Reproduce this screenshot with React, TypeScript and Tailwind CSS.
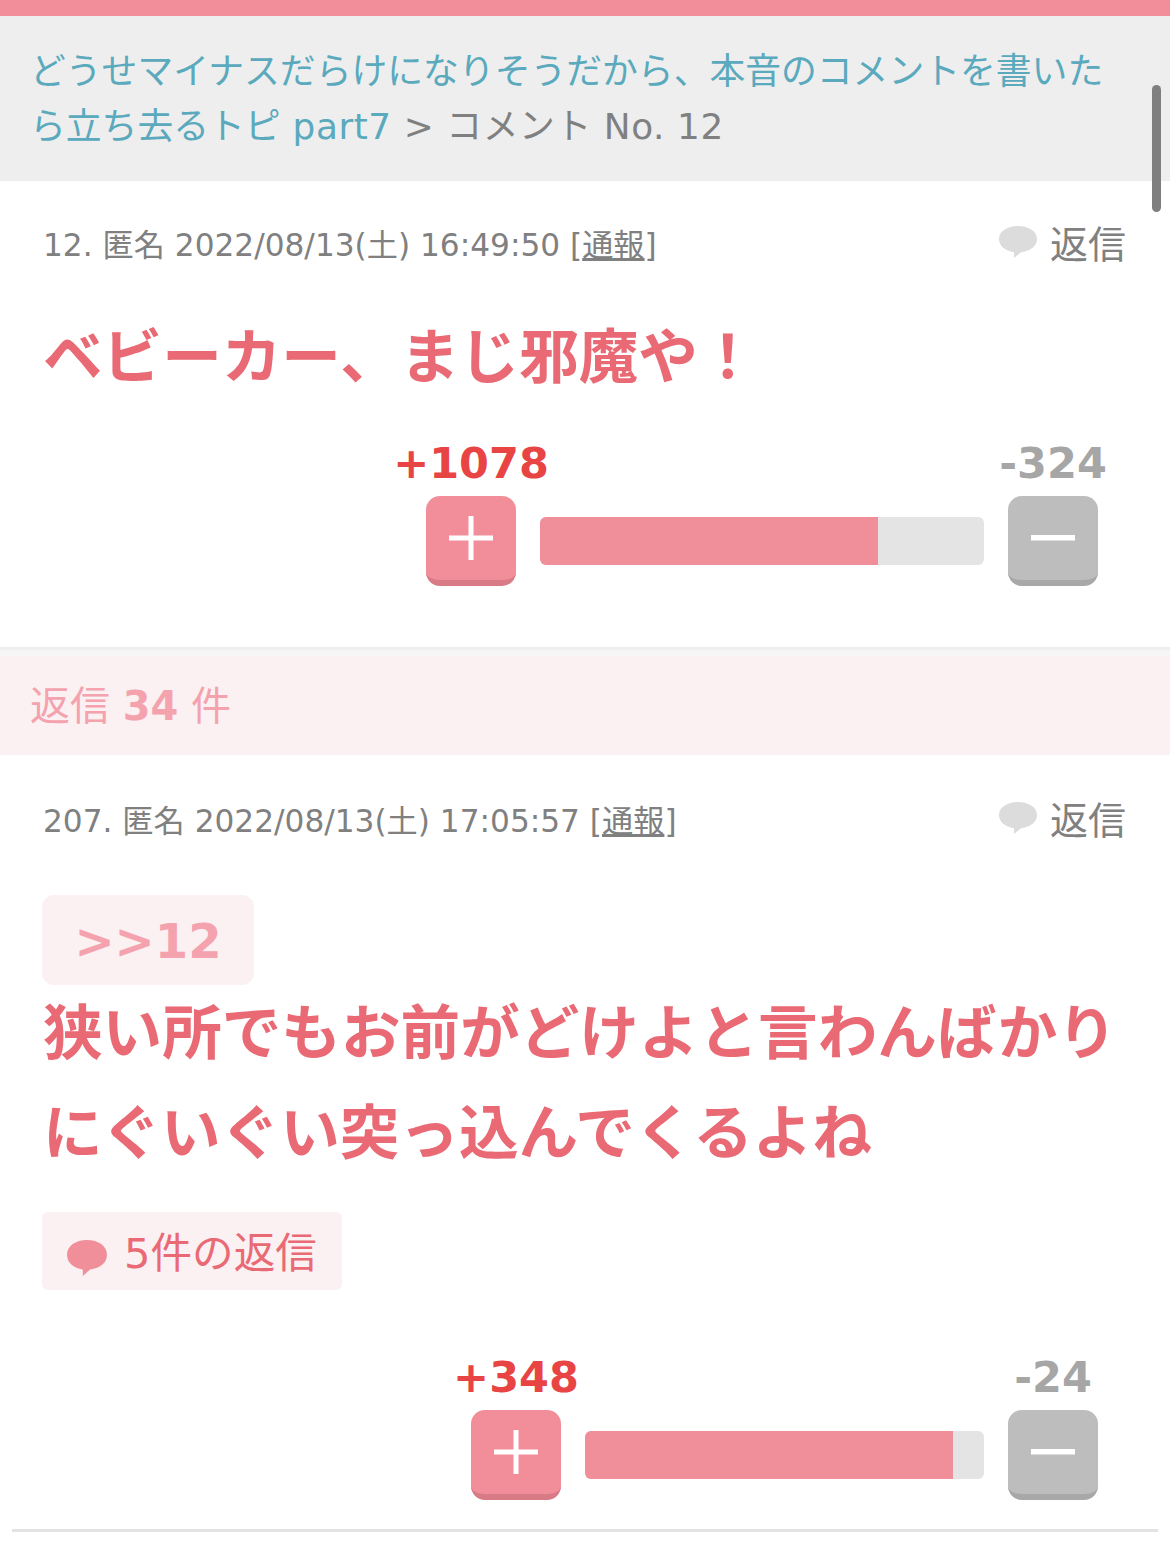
function Bubble({ className }: { className: string }) {
  return (
    <svg viewBox="0 0 40 34" preserveAspectRatio="none" className={className} fill="currentColor">
      <path d="M20 1C9 1 1 6.5 1 14c0 7 6 12 15 13.2L16 33l7-5.8C33 26 39 21 39 14 39 6.5 31 1 20 1z" />
    </svg>
  );
}

function MetaRow({ head, date }: { head: string; date: string }) {
  return (
    <div className="flex items-center justify-between pl-[43px] pr-[44px] h-[50px]">
      <div className="text-[31.2px] leading-[50px] text-[#808080] whitespace-nowrap">
        {head} {date} [<span className="underline">通報</span>]
      </div>
      <div className="flex items-center text-[#808080]">
        <Bubble className="w-[40px] h-[34px] text-[#dcdcdc] mr-[12px] mb-[6px]" />
        <span className="text-[38px] leading-[50px]">返信</span>
      </div>
    </div>
  );
}

function VoteButton({ label, symbol, plus }: { label: string; symbol: "plus" | "minus"; plus: boolean }) {
  return (
    <div className="flex flex-col items-center w-[90px]">
      <div
        className={
          plus
            ? "mt-[1px] text-[43px] leading-[50px] h-[50px] font-bold text-[#e94444] whitespace-nowrap"
            : "mt-[1px] text-[43px] leading-[50px] h-[50px] font-bold text-[#a6a6a6] whitespace-nowrap"
        }
      >
        {label}
      </div>
      <div
        className={
          plus
            ? "mt-[8px] w-[90px] h-[90px] rounded-[14px] bg-[#f28e99] border-b-[6px] border-[#d97b87] flex items-center justify-center"
            : "mt-[8px] w-[90px] h-[90px] rounded-[14px] bg-[#bdbdbd] border-b-[6px] border-[#a8a8a8] flex items-center justify-center"
        }
      >
        <svg viewBox="0 0 44 44" className="w-[44px] h-[44px]" fill="#ffffff">
          {symbol === "plus" ? (
            <path d="M0 19.5h19.5V0h5v19.5H44v5H24.5V44h-5V24.5H0z" />
          ) : (
            <rect x="0" y="19" width="44" height="5.5" />
          )}
        </svg>
      </div>
    </div>
  );
}

function Votes({ plus, minus, barWidth, fillWidth }: { plus: string; minus: string; barWidth: string; fillWidth: string }) {
  return (
    <div className="flex justify-end pr-[72px]">
      <VoteButton label={plus} symbol="plus" plus />
      <div className={"mx-[24px] mt-[80px] h-[48px] rounded-[6px] bg-[#e4e4e4] overflow-hidden " + barWidth}>
        <div className={"h-full bg-[#f08f99] " + fillWidth} />
      </div>
      <VoteButton label={minus} symbol="minus" plus={false} />
    </div>
  );
}

export default function App() {
  return (
    <div
      className="relative w-[1170px] h-[1546px] overflow-hidden bg-white"
      style={{ fontFamily: '"DejaVu Sans", "Noto Sans CJK JP", sans-serif' }}
    >
      <div className="h-[16px] bg-[#f28e99]" />
      <div className="h-[165px] bg-[#eeeeee] pl-[30px] pr-[40px] pt-[28px] text-[35.8px] leading-[55px] text-[#808080]">
        <span className="text-[#5aa9bd]">
          どうせマイナスだらけになりそうだから、本音のコメントを書いたら立ち去るトピ
          <span className="tracking-[0.6px]"> part7</span>
        </span>
        <span className="tracking-[0.6px]">{" > コメント No. 12"}</span>
      </div>

      <div className="absolute right-[9px] top-[85px] w-[9px] h-[127px] rounded-full bg-[#7f7f7f]" />

      <div className="h-[469px] pt-[39px] border-b-[3px] border-[#eeeeee]">
        <MetaRow head="12. 匿名" date="2022/08/13(土) 16:49:50" />
        <div className="mt-[48px] pl-[43px] text-[59.6px] leading-[80px] font-bold text-[#e96a74]">ベビーカー、まじ邪魔や！</div>
        <div className="mt-[39px]">
          <Votes plus="+1078" minus="-324" barWidth="w-[444px]" fillWidth="w-[338px]" />
        </div>
      </div>

      <div className="h-[6px] bg-[#f6f6f6]" />
      <div className="h-[99px] bg-[#fbf0f2] pl-[30px] flex items-center text-[40px] text-[#f4a3ae] whitespace-pre">
        返信 <span className="font-bold">34</span> 件
      </div>

      <div className="pt-[41px]">
        <MetaRow head="207. 匿名" date="2022/08/13(土) 17:05:57" />
        <div className="mt-[49px] ml-[42px] w-[212px] h-[90px] pt-[2px] rounded-[12px] bg-[#fbf0f2] flex items-center justify-center text-[48px] font-bold text-[#f4a3ae]">
          {">>12"}
        </div>
        <div className="mt-[-1px] pl-[43px] pr-[40px] text-[59.6px] leading-[100px] font-bold text-[#e96a74]">
          狭い所でもお前がどけよと言わんばかりにぐいぐい突っ込んでくるよね
        </div>
        <div className="mt-[28px] ml-[42px] w-[300px] h-[78px] pt-[6px] rounded-[6px] bg-[#fbf0f2] flex items-center pl-[24px] text-[41.6px] text-[#e96a74]">
          <Bubble className="w-[42px] h-[38px] text-[#f08f99] mr-[16px] mt-[8px]" />
          5件の返信
        </div>
        <div className="mt-[61px]">
          <Votes plus="+348" minus="-24" barWidth="w-[399px]" fillWidth="w-[368px]" />
        </div>
      </div>

      <div className="absolute left-[12px] right-[12px] top-[1529px] h-[3px] bg-[#e3e3e3]" />
    </div>
  );
}
